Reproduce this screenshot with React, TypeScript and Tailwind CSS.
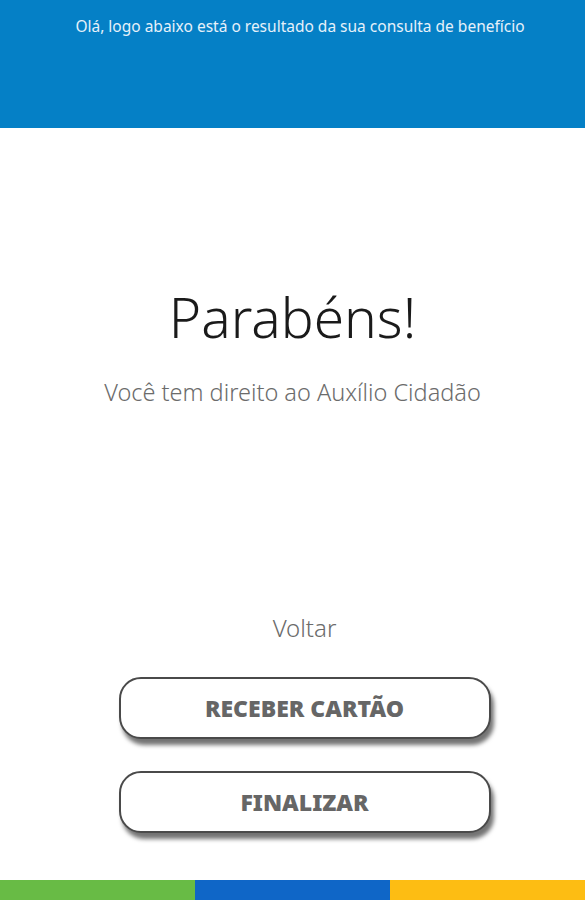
export default function App() {
  return (
    <div className="w-[585px] h-[900px] bg-white flex flex-col font-['Noto_Sans','Lato',sans-serif]">
      {/* topo azul */}
      <header className="h-[128px] bg-[#0580c6] flex justify-center pt-[14px] pl-[15px]">
        <p className="text-[15.5px] leading-[24px] text-[#e6f1fa]">
          Olá, logo abaixo está o resultado da sua consulta de benefício
        </p>
      </header>

      {/* resultado */}
      <div className="flex flex-col items-center pt-[156px]">
        <h1 className="text-[55px] leading-[66px] text-[#1a1a1a] font-light">Parabéns!</h1>
        <p className="mt-[26px] text-[23.5px] leading-[32px] text-[#6b6b6b] font-light">
          Você tem direito ao Auxílio Cidadão
        </p>
      </div>

      {/* ações */}
      <div className="flex flex-col items-center mt-[204px] pl-[24px]">
        <button className="text-[24px] leading-[32px] text-[#6b6b6b] font-light">Voltar</button>
        <button className="mt-[33px] w-[372px] h-[62px] rounded-[22px] border-2 border-[#4a4a4a] bg-white shadow-[3px_6px_4px_rgba(0,0,0,0.55)] text-[23px] font-black text-[#666]">
          RECEBER CARTÃO
        </button>
        <button className="mt-[32px] w-[372px] h-[62px] rounded-[22px] border-2 border-[#4a4a4a] bg-white shadow-[3px_6px_4px_rgba(0,0,0,0.55)] text-[23px] font-black text-[#666]">
          FINALIZAR
        </button>
      </div>

      {/* faixa de cores */}
      <div className="mt-auto h-[20px] flex">
        <div className="w-[195px] bg-[#68bb45]" />
        <div className="w-[195px] bg-[#0f66c7]" />
        <div className="flex-1 bg-[#fdbd13]" />
      </div>
    </div>
  );
}
